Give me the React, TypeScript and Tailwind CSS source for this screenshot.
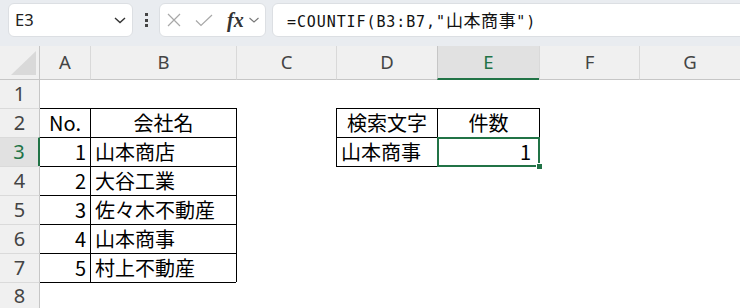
import React from "react";

type CellData = { text: string; align: "left" | "right" | "center"; bg?: string };

const data: Record<string, CellData> = {
  "2,1": { text: "No.", align: "center", bg: "bg-[#ddebf7]" },
  "2,2": { text: "会社名", align: "center", bg: "bg-[#ddebf7]" },
  "2,4": { text: "検索文字", align: "center", bg: "bg-[#e2efda]" },
  "2,5": { text: "件数", align: "center", bg: "bg-[#e2efda]" },
  "3,1": { text: "1", align: "right" },
  "3,2": { text: "山本商店", align: "left" },
  "3,4": { text: "山本商事", align: "left" },
  "3,5": { text: "1", align: "right" },
  "4,1": { text: "2", align: "right" },
  "4,2": { text: "大谷工業", align: "left" },
  "5,1": { text: "3", align: "right" },
  "5,2": { text: "佐々木不動産", align: "left" },
  "6,1": { text: "4", align: "right" },
  "6,2": { text: "山本商事", align: "left" },
  "7,1": { text: "5", align: "right" },
  "7,2": { text: "村上不動産", align: "left" },
};

function inTable(r: number, c: number) {
  if (r >= 2 && r <= 7 && c >= 1 && c <= 2) return true;
  if (r >= 2 && r <= 3 && c >= 4 && c <= 5) return true;
  return false;
}

const COLS = ["A", "B", "C", "D", "E", "F", "G"];
const ROWS = [1, 2, 3, 4, 5, 6, 7, 8];

const cellFont = { fontFamily: '"Noto Sans CJK JP", "Noto Sans", sans-serif' };

function Cell({ r, c }: { r: number; c: number }) {
  const d = data[`${r},${c}`];
  const t = inTable(r, c) || inTable(r - 1, c);
  const l = c > 1 && (inTable(r, c) || inTable(r, c - 1));
  const selected = r === 3 && c === 5;
  const cls = [
    "relative flex items-center bg-white",
    t ? "border-t border-t-black" : "",
    l ? "border-l border-l-black" : "",
    d?.bg ?? "",
    d?.align === "right" ? "justify-end" : d?.align === "center" ? "justify-center" : "justify-start",
    d?.align === "right" ? (selected ? "pr-[8px]" : "pr-[4px]") : "",
    d?.align === "left" ? "pl-[4px]" : "",
  ].join(" ");
  return (
    <div className={cls}>
      {d && (
        <span className="text-[20px] leading-none text-black whitespace-nowrap" style={cellFont}>
          {d.text}
        </span>
      )}
      {selected && (
        <div className="absolute left-[-1px] top-[-1px] w-[103px] h-[30px] border-2 border-[#217346] z-10">
          <div className="absolute left-[97px] top-[24px] w-[7px] h-[7px] bg-[#217346] border border-white" />
        </div>
      )}
    </div>
  );
}

export default function App() {
  return (
    <div className="w-[740px] h-[308px] overflow-hidden bg-white flex flex-col" style={{ fontFamily: '"Noto Sans", sans-serif' }}>
      {/* Formula bar */}
      <div className="h-[46px] shrink-0 bg-[#e9ecf0] flex items-start pt-[3px] pl-[8px]">
        <div className="w-[125px] h-[34px] bg-white rounded-[6px] border border-[#dcdfe3] flex items-center justify-between pl-[6px] pr-[5px]">
          <span className="text-[16.5px] text-[#222]" style={{ fontFamily: '"Noto Sans", sans-serif' }}>E3</span>
          <svg width="14" height="10" viewBox="0 0 14 10">
            <path d="M2 3 L7 7.5 L12 3" fill="none" stroke="#333" strokeWidth="1.4" />
          </svg>
        </div>
        <div className="w-[26px] h-[34px] flex flex-col items-center justify-center gap-[2.5px]">
          <div className="w-[3px] h-[3px] bg-[#444]" />
          <div className="w-[3px] h-[3px] bg-[#444]" />
          <div className="w-[3px] h-[3px] bg-[#444]" />
        </div>
        <div className="w-[107px] h-[34px] bg-white rounded-[6px] border border-[#dcdfe3] flex items-center pl-[7px]">
          <svg width="14" height="14" viewBox="0 0 14 14">
            <path d="M1 1 L13 13 M13 1 L1 13" stroke="#a8a8a8" strokeWidth="1.2" fill="none" />
          </svg>
          <svg width="18" height="13" viewBox="0 0 18 13" className="ml-[14px]">
            <path d="M1 6.5 L6 11.5 L17 1" stroke="#a8a8a8" strokeWidth="1.2" fill="none" />
          </svg>
          <span
            className="ml-[14px] text-[20px] leading-none italic font-bold text-[#333]"
            style={{ fontFamily: '"Liberation Serif", serif' }}
          >
            fx
          </span>
          <svg width="12" height="8" viewBox="0 0 12 8" className="ml-[4px]">
            <path d="M1.5 2 L6 6 L10.5 2" stroke="#777" strokeWidth="1.1" fill="none" />
          </svg>
        </div>
        <div className="flex-1 ml-[6px] -mr-[10px] h-[34px] bg-white rounded-[6px] border border-[#dcdfe3] flex items-center pl-[14px]">
          <span
            className="text-[15px] tracking-[0.9px] text-[#111] whitespace-nowrap"
            style={{ fontFamily: '"DejaVu Sans Mono", "Noto Sans CJK JP", monospace' }}
          >
            =COUNTIF(B3:B7,"
            <span className="text-[17px] tracking-[0.6px]" style={{ fontFamily: '"Noto Sans CJK JP", sans-serif' }}>
              山本商事
            </span>
            ")
          </span>
        </div>
      </div>

      {/* Sheet grid */}
      <div className="grid grid-cols-[40px_50px_146px_100px_101px_102px_100px_101px] grid-rows-[34px_28px_29px_29px_29px_29px_29px_29px_26px]">
        {/* Header row */}
        <div className="bg-[#f0f0f0] border-r border-b border-[#c6c6c6] relative">
          <svg width="39" height="33" viewBox="0 0 39 33" className="absolute left-0 top-0">
            <polygon points="36,5 36,29 11,29" fill="#d9d9d9" />
          </svg>
        </div>
        {COLS.map((col, i) => {
          const sel = col === "E";
          const cls = [
            "flex items-center justify-center",
            i > 0 ? "border-l" : "",
            sel
              ? "bg-[#e1e1e1] border-b-2 border-b-[#217346] border-l-[#c6c6c6] text-[#217346]"
              : "bg-[#f0f0f0] border-b border-b-[#c6c6c6] border-l-[#d9d9d9] text-[#444]",
          ].join(" ");
          return (
            <div key={col} className={cls}>
              <span className="text-[18.5px] leading-none" style={{ fontFamily: '"Noto Sans", sans-serif' }}>
                {col}
              </span>
            </div>
          );
        })}

        {ROWS.map((r) => (
          <React.Fragment key={r}>
            <div
              className={[
                "flex items-center justify-center",
                r > 1 ? "border-t border-t-[#dadada]" : "",
                r === 3
                  ? "bg-[#e1e1e1] border-r-2 border-r-[#217346] text-[#217346]"
                  : "bg-[#f0f0f0] border-r border-r-[#c6c6c6] text-[#444]",
              ].join(" ")}
            >
              <span className="text-[20px] leading-none" style={{ fontFamily: '"Noto Sans", sans-serif' }}>
                {r}
              </span>
            </div>
            {COLS.map((_, ci) => (
              <Cell key={ci} r={r} c={ci + 1} />
            ))}
          </React.Fragment>
        ))}
      </div>
    </div>
  );
}
